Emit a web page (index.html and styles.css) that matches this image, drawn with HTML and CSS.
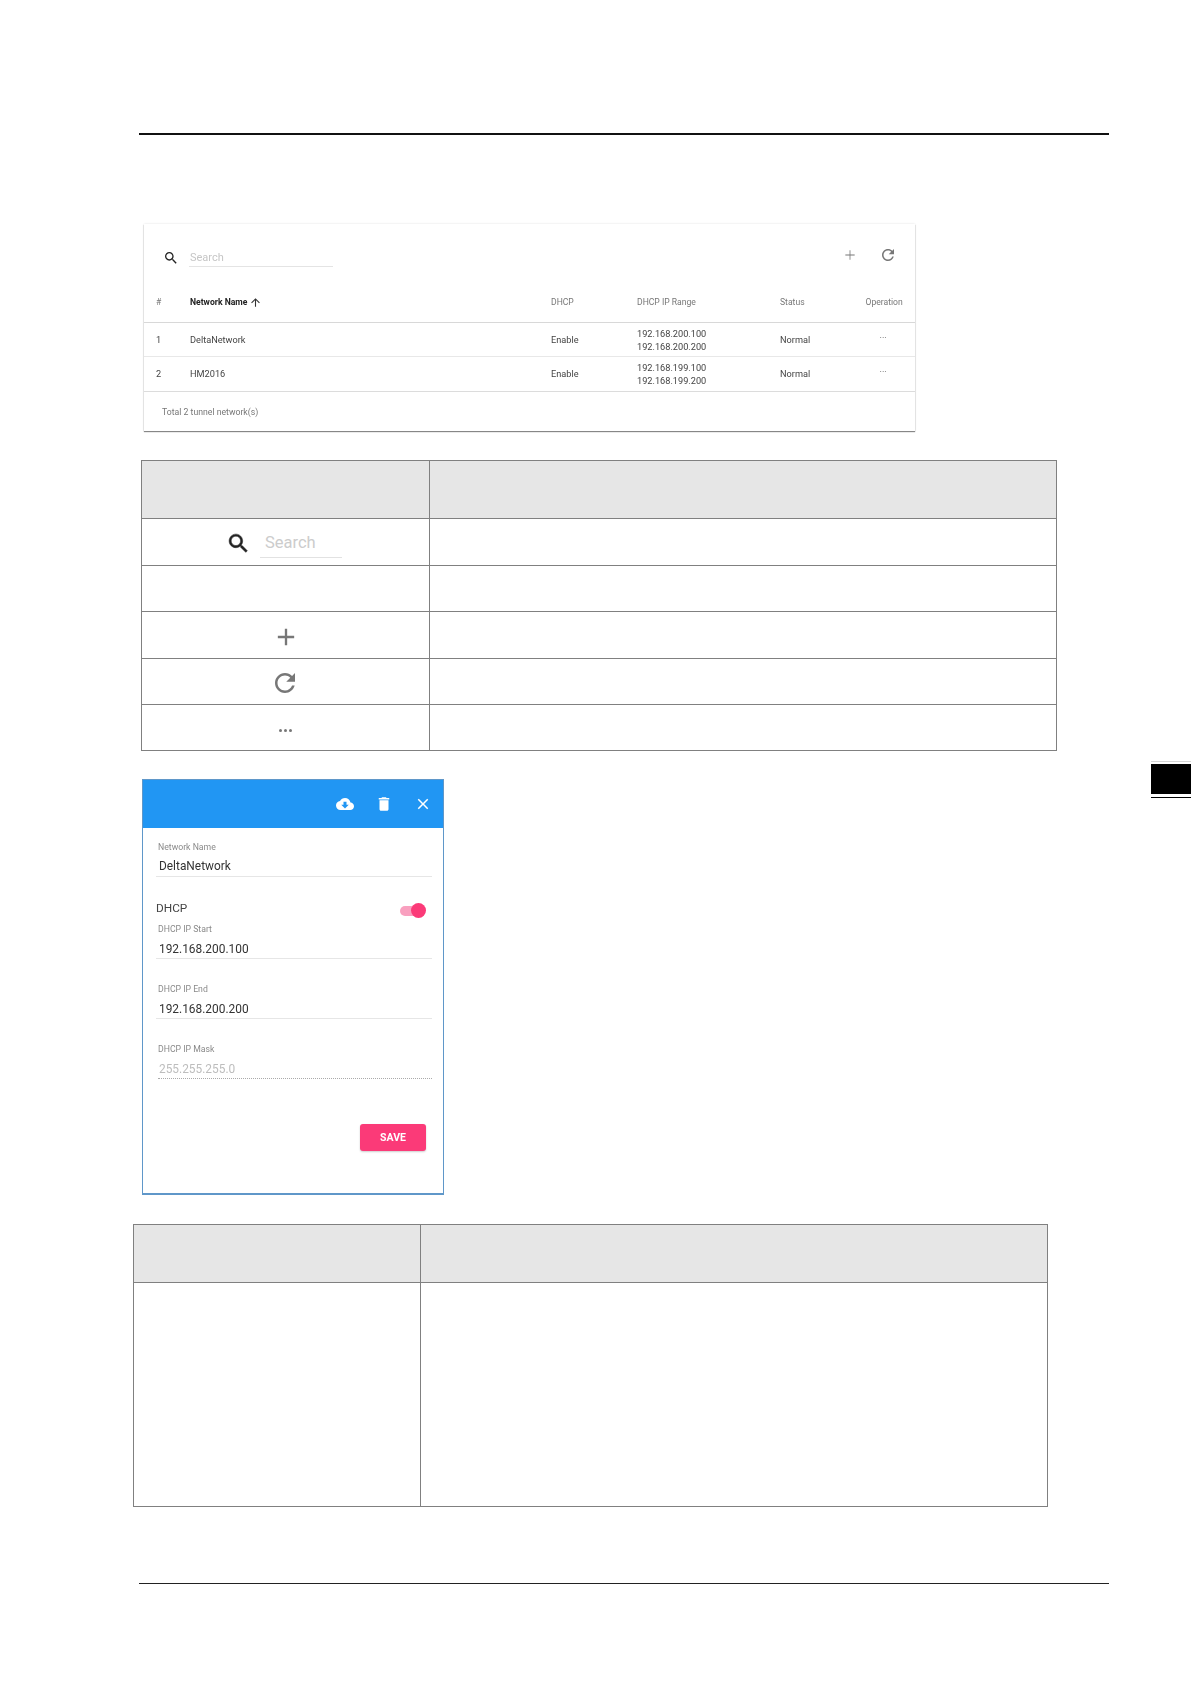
FILE: index.html
```html
<!DOCTYPE html>
<html lang="en">
<head>
<meta charset="utf-8">
<title>Tunnel networks</title>
<link rel="stylesheet" href="styles.css">
</head>
<body>
<div class="page">
  <div class="rule-top"></div>

  <section class="card shot">
    <div class="toolbar">
      <svg class="ic-search" viewBox="0 0 24 24"><path d="M15.5 14h-.79l-.28-.27C15.41 12.59 16 11.11 16 9.5 16 5.91 13.09 3 9.5 3S3 5.91 3 9.5 5.91 16 9.5 16c1.61 0 3.09-.59 4.23-1.57l.27.28v.79l5 4.99L20.49 19l-4.99-5zm-6 0C7.01 14 5 11.99 5 9.5S7.01 5 9.5 5 14 7.01 14 9.5 11.99 14 9.5 14z"/></svg>
      <div class="search">Search</div>
      <svg class="ic-plus" viewBox="0 0 24 24"><path d="M19 12.6h-6.4V19h-1.2v-6.4H5v-1.2h6.4V5h1.2v6.4H19z"/></svg>
      <svg class="ic-refresh" viewBox="0 0 24 24"><path d="M17.65 6.35C16.2 4.9 14.21 4 12 4c-4.42 0-7.99 3.58-7.99 8s3.57 8 7.99 8c3.73 0 6.84-2.55 7.73-6h-2.08c-.82 2.33-3.04 4-5.65 4-3.31 0-6-2.69-6-6s2.69-6 6-6c1.66 0 3.14.69 4.22 1.78L13 11h7V4l-2.35 2.35z"/></svg>
    </div>
    <div class="row head">
      <div>#</div>
      <div class="sort">Network Name <svg class="ic-arrow" viewBox="0 0 24 24"><path d="M4 12l1.41 1.41L11 7.83V20h2V7.83l5.58 5.59L20 12l-8-8-8 8z"/></svg></div>
      <div>DHCP</div>
      <div>DHCP IP Range</div>
      <div>Status</div>
      <div>Operation</div>
    </div>
    <div class="row body-a">
      <div>1</div><div>DeltaNetwork</div><div>Enable</div>
      <div>192.168.200.100<br>192.168.200.200</div>
      <div>Normal</div><div class="more">···</div>
    </div>
    <div class="row body-b">
      <div>2</div><div>HM2016</div><div>Enable</div>
      <div>192.168.199.100<br>192.168.199.200</div>
      <div>Normal</div><div class="more">···</div>
    </div>
    <div class="total">Total 2 tunnel network(s)</div>
  </section>

  <table class="grid grid-a">
    <colgroup><col class="col-a"><col></colgroup>
    <tr class="h58"><th></th><th></th></tr>
    <tr class="h47"><td>
      <div class="cell-search">
        <svg class="big-search" viewBox="0 0 24 24"><path d="M15.5 14h-.79l-.28-.27C15.41 12.59 16 11.11 16 9.5 16 5.91 13.09 3 9.5 3S3 5.91 3 9.5 5.91 16 9.5 16c1.61 0 3.09-.59 4.23-1.57l.27.28v.79l5 4.99L20.49 19l-4.99-5zm-6 0C7.01 14 5 11.99 5 9.5S7.01 5 9.5 5 14 7.01 14 9.5 11.99 14 9.5 14z"/></svg>
        <div class="big-field">Search</div>
      </div>
    </td><td></td></tr>
    <tr class="h46"><td></td><td></td></tr>
    <tr class="h47"><td class="center"><svg class="big-plus" viewBox="0 0 24 24"><path d="M19 13h-6v6h-2v-6H5v-2h6V5h2v6h6v2z"/></svg></td><td></td></tr>
    <tr class="h46"><td class="center"><svg class="big-refresh" viewBox="0 0 24 24"><path d="M17.65 6.35C16.2 4.9 14.21 4 12 4c-4.42 0-7.99 3.58-7.99 8s3.57 8 7.99 8c3.73 0 6.84-2.55 7.73-6h-2.08c-.82 2.33-3.04 4-5.65 4-3.31 0-6-2.69-6-6s2.69-6 6-6c1.66 0 3.14.69 4.22 1.78L13 11h7V4l-2.35 2.35z"/></svg></td><td></td></tr>
    <tr class="h46"><td class="center"><div class="dots"><span></span><span></span><span></span></div></td><td></td></tr>
  </table>

  <section class="dialog shot">
    <header class="dialog-bar">
      <svg viewBox="0 0 24 24"><path d="M19.35 10.04C18.67 6.59 15.64 4 12 4 9.11 4 6.6 5.64 5.35 8.04 2.34 8.36 0 10.91 0 14c0 3.31 2.69 6 6 6h13c2.76 0 5-2.24 5-5 0-2.64-2.05-4.78-4.65-4.96zM17 13l-5 5-5-5h3V9h4v4h3z"/></svg>
      <svg viewBox="0 0 24 24"><path d="M6 19c0 1.1.9 2 2 2h8c1.1 0 2-.9 2-2V7H6v12zM19 4h-3.5l-1-1h-5l-1 1H5v2h14V4z"/></svg>
      <svg viewBox="0 0 24 24"><path d="M19 6.41L17.59 5 12 10.59 6.41 5 5 6.41 10.59 12 5 17.59 6.41 19 12 13.41 17.59 19 19 17.59 13.41 12z"/></svg>
    </header>
    <div class="dialog-body">
      <div class="field">
        <div class="label">Network Name</div>
        <div class="value">DeltaNetwork</div>
      </div>
      <div class="switch-row">
        <span>DHCP</span>
        <div class="switch"><i></i><b></b></div>
      </div>
      <div class="field tight">
        <div class="label">DHCP IP Start</div>
        <div class="value">192.168.200.100</div>
      </div>
      <div class="field spaced">
        <div class="label">DHCP IP End</div>
        <div class="value">192.168.200.200</div>
      </div>
      <div class="field spaced disabled">
        <div class="label">DHCP IP Mask</div>
        <div class="value">255.255.255.0</div>
      </div>
      <button class="save" type="button">SAVE</button>
    </div>
  </section>

  <table class="grid grid-b">
    <colgroup><col class="col-b"><col></colgroup>
    <tr class="h58"><th></th><th></th></tr>
    <tr class="h224"><td></td><td></td></tr>
  </table>

  <div class="rule-bottom"></div>
</div>
<div class="side-tab"></div>
</body>
</html>
```

FILE: styles.css
```css
* { box-sizing: border-box; }
html, body { margin: 0; padding: 0; background: #fff; }
body { font-family: Roboto, "Liberation Sans", sans-serif; color: #333; position: relative; height: 1684px; overflow: hidden; }
.page { padding-top: 133px; }
.shot { filter: blur(.35px); }

.rule-top { height: 2px; width: 970px; margin-left: 139px; background: #111; }
.rule-bottom { height: 1px; width: 970px; margin: 76px 0 0 139px; background: #222; }

/* embedded table screenshot */
.card { width: 771px; height: 207px; margin: 89px 0 0 144px; background: #fff; box-shadow: 0 1px 1px rgba(0,0,0,.45), 0 0 2px rgba(0,0,0,.12); }
.toolbar { height: 57px; display: flex; align-items: flex-start; padding: 0 18px 0 19px; }
.toolbar svg { display: block; }
.ic-search { width: 16px; height: 16px; margin-top: 26px; fill: #222; }
.search { width: 144px; height: 19px; margin: 24px 0 0 10px; padding-left: 1px; font-size: 11px; line-height: 20px; color: #c6c6c6; border-bottom: 1px solid #e4e4e4; }
.ic-plus { width: 16px; height: 16px; margin: 23px 0 0 auto; fill: #777; }
.ic-refresh { width: 18px; height: 18px; margin: 22px 0 0 21px; fill: #777; }

.row { display: grid; grid-template-columns: 34px 361px 86px 143px 85.5px 1fr; padding-left: 12px; align-items: center; font-size: 9.2px; line-height: 13px; border-bottom: 1px solid #e8e8e8; color: #444; }
.row.head { height: 42px; padding-top: 2px; color: #777; font-size: 8.6px; border-bottom-color: #d8d8d8; }
.row.body-a { height: 34px; }
.row.body-b { height: 35px; padding-bottom: 1px; border-bottom-color: #dcdcdc; }
.sort { display: flex; align-items: center; gap: 2px; color: #222; font-weight: 700; }
.ic-arrow { width: 13px; height: 13px; fill: #333; }
.more { padding-left: 14px; align-self: start; margin-top: 10px; line-height: 10px; color: #777; }
.total { padding: 14px 0 0 18px; font-size: 8.7px; line-height: 13px; color: #777; }

/* layout tables */
.grid { border-collapse: collapse; table-layout: fixed; }
.grid th, .grid td { border: 1px solid #808080; padding: 0; }
.grid th { background: #e6e6e6; }
.grid-a { width: 916px; margin: 29px 0 0 141px; }
.grid-b { width: 915px; margin: 29px 0 0 133px; }
.col-a { width: 288px; }
.col-b { width: 287px; }
.h58 { height: 58px; }
.h47 { height: 47px; }
.h46 { height: 46px; }
.h224 { height: 224px; }
.center { text-align: center; }
.center svg { display: block; margin: 0 auto; }

.cell-search { display: flex; align-items: flex-start; height: 46px; padding-left: 84px; }
.big-search { width: 25px; height: 25px; margin-top: 12px; fill: #222; stroke: #222; stroke-width: .5; flex: none; }
.big-field { width: 82px; height: 26px; margin: 13px 0 0 9px; padding-left: 5px; font-size: 16.5px; line-height: 22px; color: #ccc; border-bottom: 1px solid #e2e2e2; }
.big-plus { width: 28px; height: 28px; fill: #777; position: relative; top: 2px; }
.big-refresh { width: 30px; height: 30px; fill: #777; position: relative; left: -1px; top: 1px; }
.dots { display: flex; justify-content: center; gap: 2px; position: relative; top: 3px; }
.dots span { width: 3px; height: 3px; border-radius: 50%; background: #777; }

/* edit dialog */
.dialog { width: 302px; margin: 28px 0 0 142px; background: #fff; border: 1px solid #5f97c9; border-bottom-width: 2px; }
.dialog-bar { height: 48px; background: #2196f3; display: flex; align-items: center; justify-content: flex-end; gap: 21px; padding-right: 11px; }
.dialog-bar svg { width: 18px; height: 18px; fill: #fff; }
.dialog-body { padding: 13px 11px 42px 13px; }
.field { border-bottom: 1px solid #e6e6e6; padding-left: 2px; height: 36px; }
.field.tight { margin-top: 7px; }
.field.spaced { margin-top: 24px; }
.label { font-size: 8.7px; line-height: 12px; color: #8a8a8a; }
.spaced .label { padding-top: .5px; line-height: 11.5px; }
.value { margin: 4px 0 0 1px; font-size: 11.9px; line-height: 19px; color: #333; }
.tight .value, .spaced .value { margin-top: 5px; }
.disabled { border-bottom: 1px dotted #aaa; margin-left: 2px; padding-left: 0; }
.disabled .value { color: #bdbdbd; }
.switch-row { margin-top: 23px; height: 16px; display: flex; justify-content: space-between; align-items: center; font-size: 11.8px; line-height: 16px; color: #444; }
.switch { width: 26px; height: 16px; margin: 6px 6px 0 0; position: relative; flex: none; }
.switch i { position: absolute; left: 0; top: 3px; width: 24px; height: 10px; border-radius: 5px; background: #f9a0bf; }
.switch b { position: absolute; right: 0; top: 0; width: 15px; height: 15px; border-radius: 50%; background: #fb3a78; }
.save { display: block; width: 66px; height: 27px; margin: 45px 6px 0 auto; padding: 0; border: 0; border-radius: 3px; background: #fb3a78; color: #fff; font: 700 10.5px/28px Roboto, "Liberation Sans", sans-serif; box-shadow: 0 1px 2px rgba(0,0,0,.2); }

/* chapter tab on the page edge */
.side-tab { position: absolute; left: 1151px; top: 761px; width: 40px; height: 37px; border-top: 1px solid #d5d5d5; border-bottom: 1.5px solid #000; background: linear-gradient(#fff 2px, #000 2px, #000 32px, #fff 32px); }
```
